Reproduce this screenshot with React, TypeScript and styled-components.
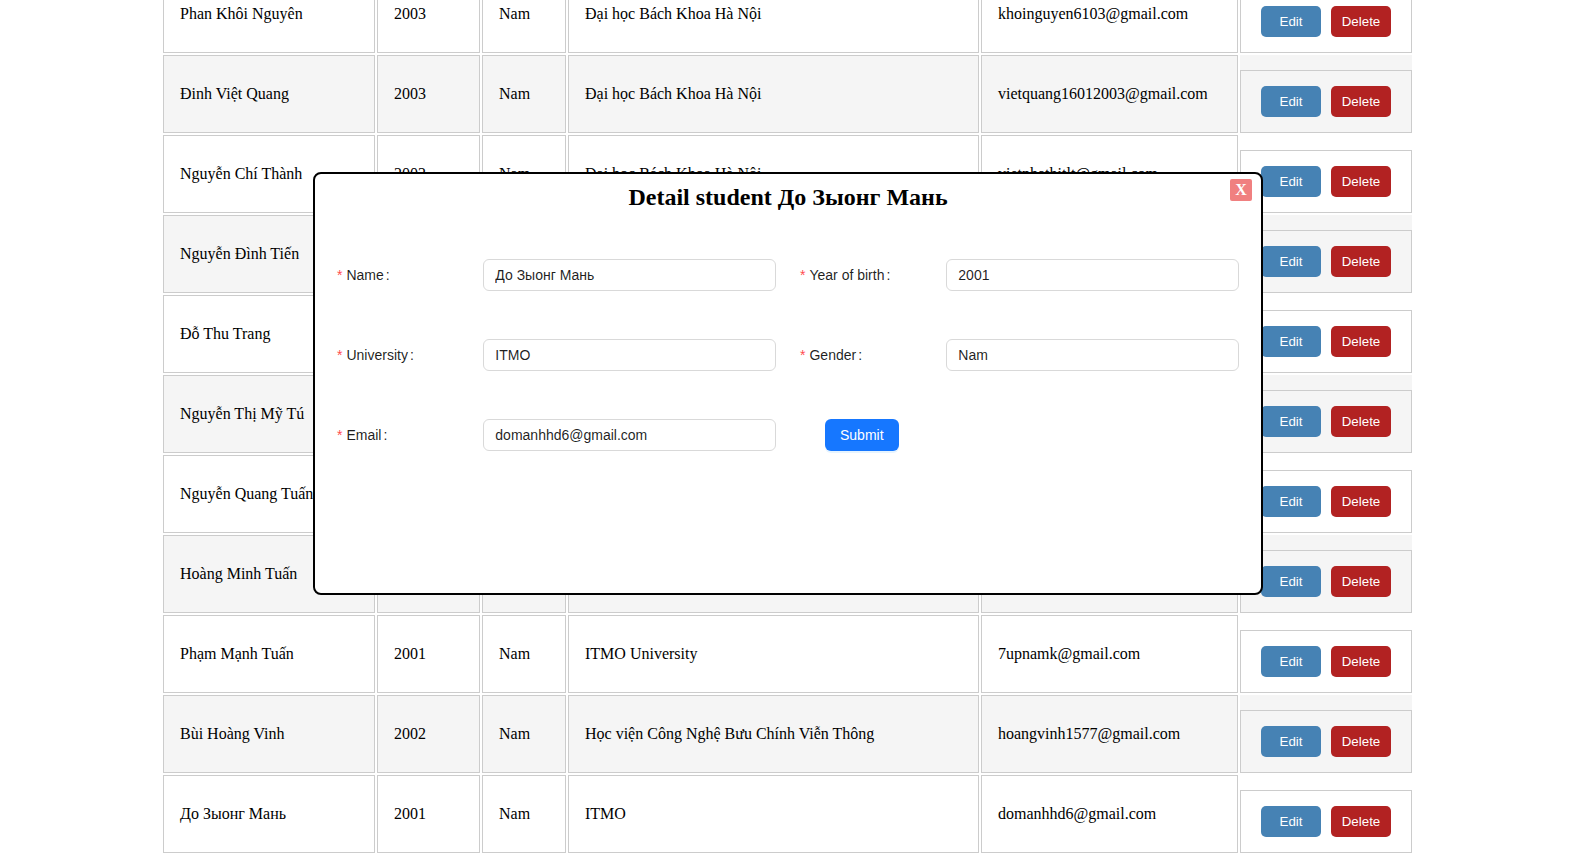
import React from "react";
import styled, { createGlobalStyle } from "styled-components";

const GlobalStyle = createGlobalStyle`
  html, body { margin: 0; padding: 0; background: #fff; }
  body { font-family: "Liberation Serif", "Times New Roman", serif; overflow: hidden; }
`;

type Student = {
  name: string;
  year: string;
  gender: string;
  university: string;
  email: string;
};

const students: Student[] = [
  { name: "Phan Khôi Nguyên", year: "2003", gender: "Nam", university: "Đại học Bách Khoa Hà Nội", email: "khoinguyen6103@gmail.com" },
  { name: "Đinh Việt Quang", year: "2003", gender: "Nam", university: "Đại học Bách Khoa Hà Nội", email: "vietquang16012003@gmail.com" },
  { name: "Nguyễn Chí Thành", year: "2002", gender: "Nam", university: "Đại học Bách Khoa Hà Nội", email: "vietnhathitlt@gmail.com" },
  { name: "Nguyễn Đình Tiến", year: "2002", gender: "Nam", university: "Đại học Bách Khoa Hà Nội", email: "dinhtien2002@gmail.com" },
  { name: "Đỗ Thu Trang", year: "2003", gender: "Nữ", university: "Đại học Ngoại Thương", email: "thutrang2003@gmail.com" },
  { name: "Nguyễn Thị Mỹ Tú", year: "2003", gender: "Nữ", university: "Đại học Kinh tế Quốc dân", email: "mytu2003@gmail.com" },
  { name: "Nguyễn Quang Tuấn", year: "2002", gender: "Nam", university: "Đại học Bách Khoa Hà Nội", email: "quangtuan2002@gmail.com" },
  { name: "Hoàng Minh Tuấn", year: "2002", gender: "Nam", university: "Đại học Bách Khoa Hà Nội", email: "minhtuan2002@gmail.com" },
  { name: "Phạm Mạnh Tuấn", year: "2001", gender: "Nam", university: "ITMO University", email: "7upnamk@gmail.com" },
  { name: "Bùi Hoàng Vinh", year: "2002", gender: "Nam", university: "Học viện Công Nghệ Bưu Chính Viễn Thông", email: "hoangvinh1577@gmail.com" },
  { name: "До Зыонг Мань", year: "2001", gender: "Nam", university: "ITMO", email: "domanhhd6@gmail.com" },
];

const Page = styled.div`
  padding-left: 161px;
`;

const Table = styled.table`
  margin-top: -27px;
  border-collapse: separate;
  border-spacing: 2px;
  table-layout: fixed;
  width: 1253px;
  font-family: "Liberation Serif", "Times New Roman", serif;
  font-size: 16px;
  color: #000;
`;

const Row = styled.tr<{ $striped: boolean }>`
  background: ${(p) => (p.$striped ? "#f5f5f5" : "#ffffff")};
`;

const Cell = styled.td`
  box-sizing: border-box;
  height: 78px;
  padding: 0 16px;
  border: 1px solid #cccccc;
  vertical-align: middle;
  white-space: nowrap;
  overflow: hidden;
`;

const ActionCell = styled.td`
  padding: 0;
  border: none;
  vertical-align: bottom;
`;

const ActionBox = styled.div`
  box-sizing: border-box;
  display: flex;
  align-items: center;
  gap: 10px;
  height: 63px;
  padding: 0 20px;
  border: 1px solid #cccccc;
`;

const ActionButton = styled.button<{ $variant: "edit" | "delete" }>`
  width: 60px;
  height: 31px;
  padding: 0;
  border: none;
  border-radius: 5px;
  background: ${(p) => (p.$variant === "edit" ? "#4682b4" : "#b22222")};
  color: #fff;
  font-family: "Liberation Sans", Arial, sans-serif;
  font-size: 13.333px;
  cursor: pointer;
`;

const Modal = styled.div`
  position: fixed;
  top: 172px;
  left: 313px;
  width: 950px;
  height: 423px;
  box-sizing: border-box;
  padding: 10px 22px 0;
  background: #fff;
  border: 2px solid #000;
  border-radius: 8px;
`;

const Title = styled.h2`
  margin: 0 0 48px;
  text-align: center;
  font-family: "Liberation Serif", "Times New Roman", serif;
  font-size: 24px;
  font-weight: 700;
  line-height: normal;
  color: #000;
`;

const CloseButton = styled.button`
  position: absolute;
  top: 5px;
  right: 9px;
  width: 22px;
  height: 22px;
  padding: 0;
  border: none;
  border-radius: 2px;
  background: #f08080;
  color: #fff;
  font-family: "Liberation Serif", "Times New Roman", serif;
  font-size: 16px;
  font-weight: 700;
  line-height: 22px;
  cursor: pointer;
`;

const FormGrid = styled.div`
  display: grid;
  grid-template-columns: 1fr 1fr;
  column-gap: 24px;
  row-gap: 48px;
  font-family: "Liberation Sans", Arial, sans-serif;
  font-size: 14px;
  color: rgba(0, 0, 0, 0.88);
`;

const Item = styled.div`
  display: grid;
  grid-template-columns: 1fr 2fr;
  align-items: center;
  height: 32px;
`;

const Label = styled.label`
  display: flex;
  align-items: center;
  height: 32px;
  white-space: nowrap;
`;

const Star = styled.span`
  color: #ff4d4f;
  margin-right: 4px;
  font-size: 14px;
  line-height: 1;
`;

const Colon = styled.span`
  margin: 0 8px 0 2px;
`;

const Input = styled.input`
  box-sizing: border-box;
  width: 100%;
  height: 32px;
  padding: 4px 11px;
  border: 1px solid #d9d9d9;
  border-radius: 6px;
  background: #fff;
  color: rgba(0, 0, 0, 0.88);
  font-family: "Liberation Sans", Arial, sans-serif;
  font-size: 14px;
  outline: none;
`;

const SubmitButton = styled.button`
  justify-self: start;
  align-self: center;
  margin-left: 25px;
  height: 32px;
  padding: 0 15px;
  border: none;
  border-radius: 6px;
  background: #1677ff;
  color: #fff;
  font-family: "Liberation Sans", Arial, sans-serif;
  font-size: 14px;
  box-shadow: 0 2px 0 rgba(5, 145, 255, 0.1);
  cursor: pointer;
`;

const FormField: React.FC<{ label: string; value: string }> = ({ label, value }) => (
  <Item>
    <Label>
      <Star>*</Star>
      {label}
      <Colon>:</Colon>
    </Label>
    <Input value={value} readOnly />
  </Item>
);

export default function App() {
  return (
    <>
      <GlobalStyle />
      <Page>
        <Table>
          <colgroup>
            <col style={{ width: 212 }} />
            <col style={{ width: 103 }} />
            <col style={{ width: 84 }} />
            <col style={{ width: 411 }} />
            <col style={{ width: 257 }} />
            <col style={{ width: 172 }} />
          </colgroup>
          <tbody>
            {students.map((s, i) => (
              <Row key={i} $striped={i % 2 === 1}>
                <Cell>{s.name}</Cell>
                <Cell>{s.year}</Cell>
                <Cell>{s.gender}</Cell>
                <Cell>{s.university}</Cell>
                <Cell>{s.email}</Cell>
                <ActionCell>
                  <ActionBox>
                    <ActionButton $variant="edit">Edit</ActionButton>
                    <ActionButton $variant="delete">Delete</ActionButton>
                  </ActionBox>
                </ActionCell>
              </Row>
            ))}
          </tbody>
        </Table>
      </Page>
      <Modal>
        <CloseButton>X</CloseButton>
        <Title>Detail student До Зыонг Мань</Title>
        <FormGrid>
          <FormField label="Name" value="До Зыонг Мань" />
          <FormField label="Year of birth" value="2001" />
          <FormField label="University" value="ITMO" />
          <FormField label="Gender" value="Nam" />
          <FormField label="Email" value="domanhhd6@gmail.com" />
          <SubmitButton>Submit</SubmitButton>
        </FormGrid>
      </Modal>
    </>
  );
}
